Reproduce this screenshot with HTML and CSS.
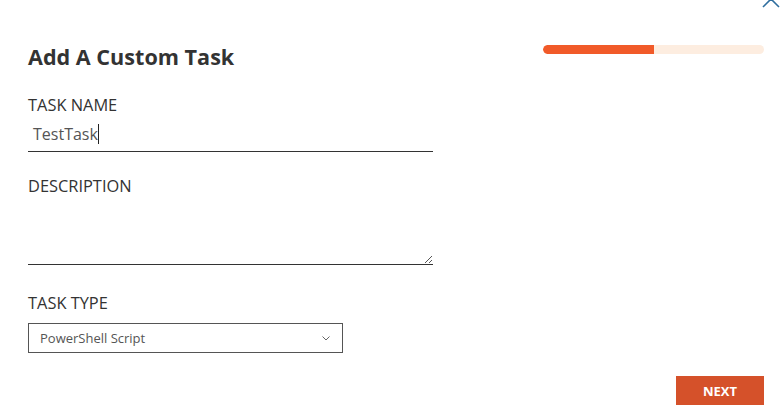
FILE: index.html
```html
<!DOCTYPE html>
<html lang="en">
<head>
    <meta charset="UTF-8">
    <title>Add A Custom Task</title>
    <link rel="stylesheet" href="styles.css">
</head>
<body>
    <div class="modal">
        <!-- close icon, partly out of view -->
        <svg class="close-icon" width="20" height="20" viewBox="0 0 20 20">
            <path d="M2 2 L18 18 M18 2 L2 18" stroke="#2f6e9e" stroke-width="1.6" fill="none"/>
        </svg>
        <div class="modal-header">
            <h1>Add A Custom Task</h1>
            <div class="progress">
                <div class="progress-fill" style="width: 50%;"></div>
            </div>
        </div>
        <form class="task-form">
            <label for="taskName">TASK NAME</label>
            <div class="name-field">
                <span class="name-value">TestTask</span><span class="caret"></span>
            </div>

            <label for="description" class="desc-label">DESCRIPTION</label>
            <div class="desc-field">
                <svg class="resize-grip" width="8" height="8" viewBox="0 0 8 8">
                    <path d="M1 8 L8 1 M5 8 L8 5" stroke="#555" stroke-width="1" fill="none"/>
                </svg>
            </div>

            <label for="taskType" class="type-label">TASK TYPE</label>
            <div class="select-box">
                <span>PowerShell Script</span>
                <svg width="8" height="5" viewBox="0 0 8 5">
                    <path d="M0.5 0.5 L4 4 L7.5 0.5" stroke="#666" stroke-width="1" fill="none"/>
                </svg>
            </div>
        </form>
        <div class="modal-footer">
            <button type="button" class="next-button">NEXT</button>
        </div>
    </div>
</body>
</html>
```

FILE: styles.css
```css
body {
    margin: 0;
    padding: 0;
    background-color: white;
    font-family: "Open Sans", Arial, sans-serif;
    color: #333;
}
.modal {
    position: relative;
    height: 412px;
    box-sizing: border-box;
    padding: 42px 20px 0 28px;
    overflow: hidden;
}
.close-icon {
    position: absolute;
    top: -11px;
    right: 3px;
}
.modal-header {
    display: flex;
    justify-content: space-between;
    align-items: flex-start;
}
h1 {
    margin: 0;
    font-size: 21.6px;
    line-height: 30px;
    font-weight: 700;
    color: #333;
}
.progress {
    width: 221px;
    height: 9px;
    margin-top: 3px;
    border-radius: 5px;
    background-color: #fdede0;
    overflow: hidden;
}
.progress-fill {
    height: 100%;
    background-color: #f15a29;
    border-radius: 5px 0 0 5px;
}
.task-form {
    width: 405px;
    display: flex;
    flex-direction: column;
}
label {
    display: block;
    font-size: 16.4px;
    line-height: 22px;
    margin-top: 22px;
    color: #333;
}
.name-field {
    height: 35px;
    border-bottom: 1px solid #333;
    padding-left: 5px;
    display: flex;
    align-items: center;
    font-size: 16px;
    color: #555;
}
.caret {
    display: inline-block;
    width: 1px;
    height: 20px;
    background-color: #222;
}
.desc-label {
    margin-top: 23px;
}
.desc-field {
    position: relative;
    height: 67px;
    border-bottom: 1px solid #333;
}
.resize-grip {
    position: absolute;
    right: 1px;
    bottom: 1px;
}
.type-label {
    margin-top: 27px;
}
.select-box {
    box-sizing: border-box;
    width: 315px;
    height: 30px;
    margin-top: 9px;
    border: 1px solid #555;
    display: flex;
    align-items: center;
    justify-content: space-between;
    padding: 0 12px 0 11px;
    font-size: 13px;
    color: #555;
}
.modal-footer {
    display: flex;
    justify-content: flex-end;
    margin-top: 23px;
}
.next-button {
    width: 88px;
    height: 29px;
    border: none;
    background-color: #d5512a;
    color: white;
    font-family: "Open Sans", Arial, sans-serif;
    font-size: 13px;
    font-weight: 700;
    cursor: pointer;
}
```
